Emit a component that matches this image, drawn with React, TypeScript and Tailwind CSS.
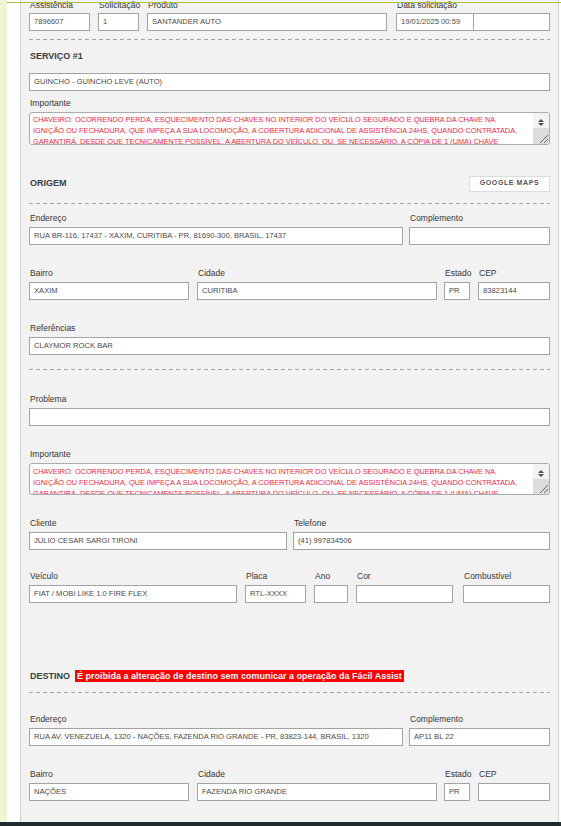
import React from 'react';

const memoLines = [
  'CHAVEIRO: OCORRENDO PERDA, ESQUECIMENTO DAS CHAVES NO INTERIOR DO VEÍCULO SEGURADO E QUEBRA DA CHAVE NA',
  'IGNIÇÃO OU FECHADURA, QUE IMPEÇA A SUA LOCOMOÇÃO, A COBERTURA ADICIONAL DE ASSISTÊNCIA 24HS, QUANDO CONTRATADA,',
  'GARANTIRÁ, DESDE QUE TECNICAMENTE POSSÍVEL, A ABERTURA DO VEÍCULO, OU, SE NECESSÁRIO, A CÓPIA DE 1 (UMA) CHAVE',
];

function Label({ children }: { children: React.ReactNode }) {
  return (
    <div className="h-[11px] whitespace-nowrap pl-px text-[8.5px] leading-[11px] text-[#363636]">
      {children}
    </div>
  );
}

function Box({ value = '', className = '' }: { value?: string; className?: string }) {
  return (
    <div
      className={`flex h-[18px] items-center overflow-hidden whitespace-nowrap border border-[#a3a3a3] bg-white px-[4px] text-[7.6px] text-[#4a4a4a] ${className}`}
    >
      {value}
    </div>
  );
}

function Field({ label, value, w }: { label: string; value?: string; w: string }) {
  return (
    <div className={w}>
      <Label>{label}</Label>
      <div className="mt-[3px]">
        <Box value={value} />
      </div>
    </div>
  );
}

function Dashed() {
  return <div className="h-px bg-[repeating-linear-gradient(90deg,#a3a3a3_0_4px,transparent_4px_7px)]" />;
}

function Heading({ children }: { children: React.ReactNode }) {
  return <div className="text-[9px] font-bold leading-[12px] text-[#3c3c3c]">{children}</div>;
}

function Memo({ pad, h }: { pad: string; h: string }) {
  return (
    <div className={`flex overflow-hidden rounded-[3px] border border-[#acacac] bg-white ${h}`}>
      <div className={`flex-1 overflow-hidden pl-[3px] text-[7.35px] leading-[11px] text-[#f2263f] ${pad}`}>
        {memoLines.map((l, i) => (
          <div key={i} className="whitespace-nowrap">
            {l}
          </div>
        ))}
      </div>
      <div className="flex w-[16px] flex-col">
        <div className="h-[15px] bg-[#f3f3f3]">
          <svg width="16" height="15" viewBox="0 0 16 15">
            <polygon points="5,9 11,9 8,6" fill="#505050" />
            <polygon points="5,10 11,10 8,13" fill="#505050" />
          </svg>
        </div>
        <div className="flex flex-1 items-end justify-end bg-[#dcdcdc]">
          <svg width="12" height="12" viewBox="0 0 12 12">
            <path d="M11 3 L3 11 M11 7 L7 11" stroke="#6a6a6a" strokeWidth="1" />
          </svg>
        </div>
      </div>
    </div>
  );
}

export default function App() {
  return (
    <div className="relative h-[826px] overflow-hidden bg-white font-['Liberation_Sans',Arial,sans-serif]">
      <div className="absolute left-[7px] right-0 top-[2px] h-px bg-[#a8c63c]" />
      <div className="flex h-[822px]">
        <div className="w-[7px] bg-[#eff5d2]" />
        <div className="w-[13px] bg-white" />
        <div className="w-[539px] border-x border-[#d2d2d2] bg-[#f2f2f2] px-[8px]">
          {/* cabeçalho */}
          <div className="flex">
            <div className="w-[61px]">
              <Label>Assistência</Label>
              <div className="mt-[2px]">
                <Box value="7896607" />
              </div>
            </div>
            <div className="ml-[8px] w-[41px]">
              <Label>Solicitação</Label>
              <div className="mt-[2px]">
                <Box value="1" />
              </div>
            </div>
            <div className="ml-[8px] w-[240px]">
              <Label>Produto</Label>
              <div className="mt-[2px]">
                <Box value="SANTANDER AUTO" />
              </div>
            </div>
            <div className="ml-[9px] w-[154px]">
              <Label>Data solicitação</Label>
              <div className="mt-[2px] flex">
                <Box value="19/01/2025 00:59" className="w-[78px]" />
                <Box className="w-[76px] border-l-0" />
              </div>
            </div>
          </div>

          <div className="mt-[8px]">
            <Dashed />
          </div>

          {/* serviço */}
          <div className="mt-[10px] pl-px">
            <Heading>SERVIÇO #1</Heading>
          </div>
          <div className="mt-[11px]">
            <Box value="GUINCHO - GUINCHO LEVE (AUTO)" />
          </div>
          <div className="mt-[7px]">
            <Label>Importante</Label>
            <div className="mt-[3px]">
              <Memo pad="pt-px" h="h-[33px]" />
            </div>
          </div>

          {/* origem */}
          <div className="mt-[30px] flex h-[16px] items-center justify-between pl-px">
            <Heading>ORIGEM</Heading>
            <button className="mt-px h-[16px] w-[81px] border border-[#dcdcdc] bg-white text-[7px] font-bold tracking-[0.6px] text-[#555]">
              GOOGLE MAPS
            </button>
          </div>
          <div className="mt-[12px]">
            <Dashed />
          </div>
          <div className="mt-[9px] flex gap-[6px]">
            <Field label="Endereço" value="RUA BR-116, 17437 - XAXIM, CURITIBA - PR, 81690-300, BRASIL, 17437" w="w-[374px]" />
            <Field label="Complemento" w="w-[141px]" />
          </div>
          <div className="mt-[23px] flex">
            <Field label="Bairro" value="XAXIM" w="w-[160px]" />
            <div className="ml-[8px]">
              <Field label="Cidade" value="CURITIBA" w="w-[240px]" />
            </div>
            <div className="ml-[7px]">
              <Field label="Estado" value="PR" w="w-[26px]" />
            </div>
            <div className="ml-[8px]">
              <Field label="CEP" value="83823144" w="w-[72px]" />
            </div>
          </div>
          <div className="mt-[23px]">
            <Field label="Referências" value="CLAYMOR ROCK BAR" w="w-full" />
          </div>
          <div className="mt-[14px]">
            <Dashed />
          </div>

          {/* problema */}
          <div className="mt-[24px]">
            <Field label="Problema" w="w-full" />
          </div>
          <div className="mt-[23px]">
            <Label>Importante</Label>
            <div className="mt-[3px]">
              <Memo pad="pt-[2px]" h="h-[32px]" />
            </div>
          </div>
          <div className="mt-[23px] flex gap-[6px]">
            <Field label="Cliente" value="JULIO CESAR SARGI TIRONI" w="w-[258px]" />
            <Field label="Telefone" value="(41) 997834506" w="w-[257px]" />
          </div>
          <div className="mt-[21px] flex">
            <Field label="Veículo" value="FIAT / MOBI LIKE 1.0 FIRE FLEX" w="w-[208px]" />
            <div className="ml-[8px]">
              <Field label="Placa" value="RTL-XXXX" w="w-[61px]" />
            </div>
            <div className="ml-[8px]">
              <Field label="Ano" w="w-[34px]" />
            </div>
            <div className="ml-[8px]">
              <Field label="Cor" w="w-[97px]" />
            </div>
            <div className="ml-[10px]">
              <Field label="Combustível" w="w-[87px]" />
            </div>
          </div>

          {/* destino */}
          <div className="mt-[66px] flex h-[13px] items-center gap-[5px] pl-px">
            <Heading>DESTINO</Heading>
            <span className="bg-[#ff0000] px-[2px] text-[9px] font-bold leading-[12px] text-white">
              É proibida a alteração de destino sem comunicar a operação da Fácil Assist
            </span>
          </div>
          <div className="mt-[10px]">
            <Dashed />
          </div>
          <div className="mt-[21px] flex gap-[6px]">
            <Field
              label="Endereço"
              value="RUA AV. VENEZUELA, 1320 - NAÇÕES, FAZENDA RIO GRANDE - PR, 83823-144, BRASIL, 1320"
              w="w-[374px]"
            />
            <Field label="Complemento" value="AP11 BL 22" w="w-[141px]" />
          </div>
          <div className="mt-[23px] flex">
            <Field label="Bairro" value="NAÇÕES" w="w-[160px]" />
            <div className="ml-[8px]">
              <Field label="Cidade" value="FAZENDA RIO GRANDE" w="w-[240px]" />
            </div>
            <div className="ml-[7px]">
              <Field label="Estado" value="PR" w="w-[26px]" />
            </div>
            <div className="ml-[8px]">
              <Field label="CEP" w="w-[72px]" />
            </div>
          </div>
        </div>
        <div className="flex-1 bg-white" />
      </div>
      <div className="h-[4px] bg-[#1f2b2d]" />
    </div>
  );
}
